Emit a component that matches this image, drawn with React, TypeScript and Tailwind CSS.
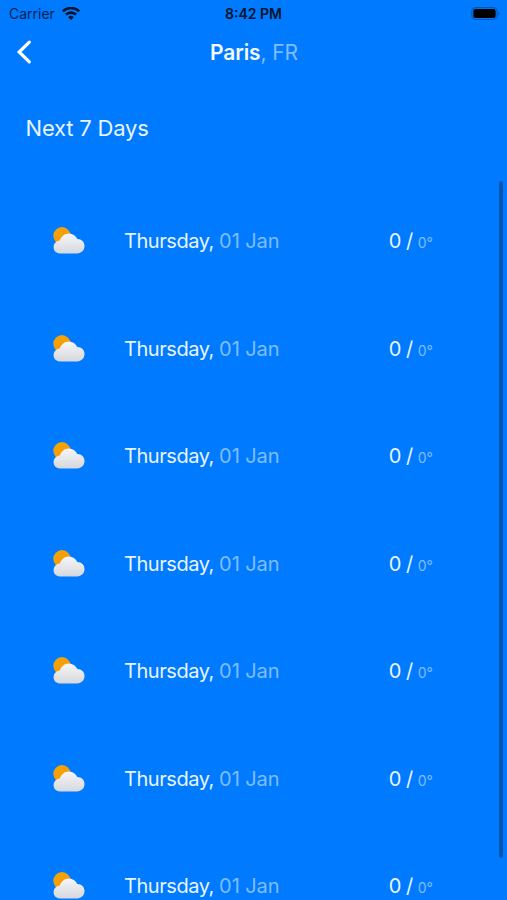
interface Forecast {
  id: number;
  day: string;
  date: string;
  high: number;
  low: number;
}

const forecasts: Forecast[] = Array.from({ length: 7 }, (_, id) => ({
  id,
  day: 'Thursday',
  date: '01 Jan',
  high: 0,
  low: 0,
}));

function WifiIcon() {
  return (
    <svg className="ml-[7px] h-[14px] w-[18px]" viewBox="0 0 18 14" fill="none" stroke="#00132b" strokeWidth="2.6">
      <path d="M.9 4.3a11.5 11.5 0 0 1 16.2 0" />
      <path d="M3.9 7.7a7.2 7.2 0 0 1 10.2 0" />
      <path d="M9 13 6.2 10.2a4 4 0 0 1 5.6 0z" fill="#00132b" stroke="none" />
    </svg>
  );
}

function BatteryIcon() {
  return (
    <svg className="h-[14px] w-[30px]" viewBox="0 0 30 14">
      <rect x="0.9" y="0.6" width="25.2" height="11.9" rx="3.8" fill="none" stroke="#0058b5" strokeWidth="1.2" />
      <rect x="2.4" y="2" width="22.2" height="9.1" rx="2.2" fill="#000" />
      <path d="M27.3 4.6v3.9c1.6-.6 1.6-3.3 0-3.9z" fill="#0058b5" />
    </svg>
  );
}

function WeatherIcon() {
  return (
    <svg className="h-7 w-8" viewBox="0 0 32 28">
      <defs>
        <linearGradient id="sun" x1="0" y1="0" x2="0.6" y2="1">
          <stop offset="0" stopColor="#eda90c" />
          <stop offset="1" stopColor="#ff9500" />
        </linearGradient>
        <linearGradient id="cloud" x1="0" y1="0" x2="0" y2="1">
          <stop offset="0" stopColor="#f6f6f8" />
          <stop offset="1" stopColor="#d5d8dd" />
        </linearGradient>
      </defs>
      <circle cx="9" cy="8.8" r="8.7" fill="url(#sun)" />
      <path
        d="M7 26.4C3.2 26.4.6 23.900.6 20.300c0-3.500 2.300-6.200 6.200-6.800C8.200 9.200 11.600 6.400 15.800 6.400c3.900 0 6.900 2.100 8.500 5.600 4.400 0 7.200 3 7.200 7.100 0 4.300-3 7.300-7.300 7.300z"
        fill="url(#cloud)"
      />
    </svg>
  );
}

function ForecastRow({ forecast }: { forecast: Forecast }) {
  return (
    <li className="flex h-[107.5px] shrink-0 items-center pl-[53px] pr-[74px] text-[20px] text-[#e8f4ff]">
      <WeatherIcon />
      <p className="ml-[39px] flex-1 whitespace-nowrap tracking-[-0.45px]">
        {forecast.day}, <span className="tracking-[-0.08px] text-[#80bdff]">{forecast.date}</span>
      </p>
      <p className="whitespace-nowrap tracking-[-0.5px]">
        {forecast.high} / <span className="text-[14px] tracking-normal text-[#80bdff]">{forecast.low}°</span>
      </p>
    </li>
  );
}

export default function App() {
  return (
    <div className="relative flex h-[900px] w-full flex-col overflow-hidden bg-[#007aff] font-['Inter',sans-serif]">
      <div className="grid h-[27px] shrink-0 grid-cols-3 items-center text-[14px] text-[#00234b]">
        <div className="flex items-center pl-[9px]">
          <span>Carrier</span>
          <WifiIcon />
        </div>
        <span className="text-center font-semibold text-[#00132b]">8:42 PM</span>
        <div className="flex justify-end pr-[6px]">
          <BatteryIcon />
        </div>
      </div>

      <header className="grid h-[50px] shrink-0 grid-cols-3 items-center">
        <svg className="ml-4 h-6 w-4" viewBox="0 0 16 24" fill="none" stroke="#fff" strokeWidth="3.2" strokeLinecap="round">
          <path d="M13.3 2.2 3.2 12l10.1 9.8" />
        </svg>
        <h1 className="pl-px pt-0.5 text-center text-[21px] font-semibold tracking-[-0.1px] text-[#f2f9ff]">
          Paris<span className="font-normal text-[#80bdff]">, FR</span>
        </h1>
      </header>

      <h2 className="mt-[35px] h-8 shrink-0 pl-[25.5px] text-[22px] leading-8 tracking-[-0.2px] text-[#e8f4ff]">
        Next 7 Days
      </h2>

      <ul className="mt-[43.500px] flex shrink-0 flex-col">
        {forecasts.map((forecast) => (
          <ForecastRow key={forecast.id} forecast={forecast} />
        ))}
      </ul>

      <div className="absolute right-[4px] top-[181px] h-[677px] w-[4px] rounded-full bg-[#0055b3]" />
    </div>
  );
}
